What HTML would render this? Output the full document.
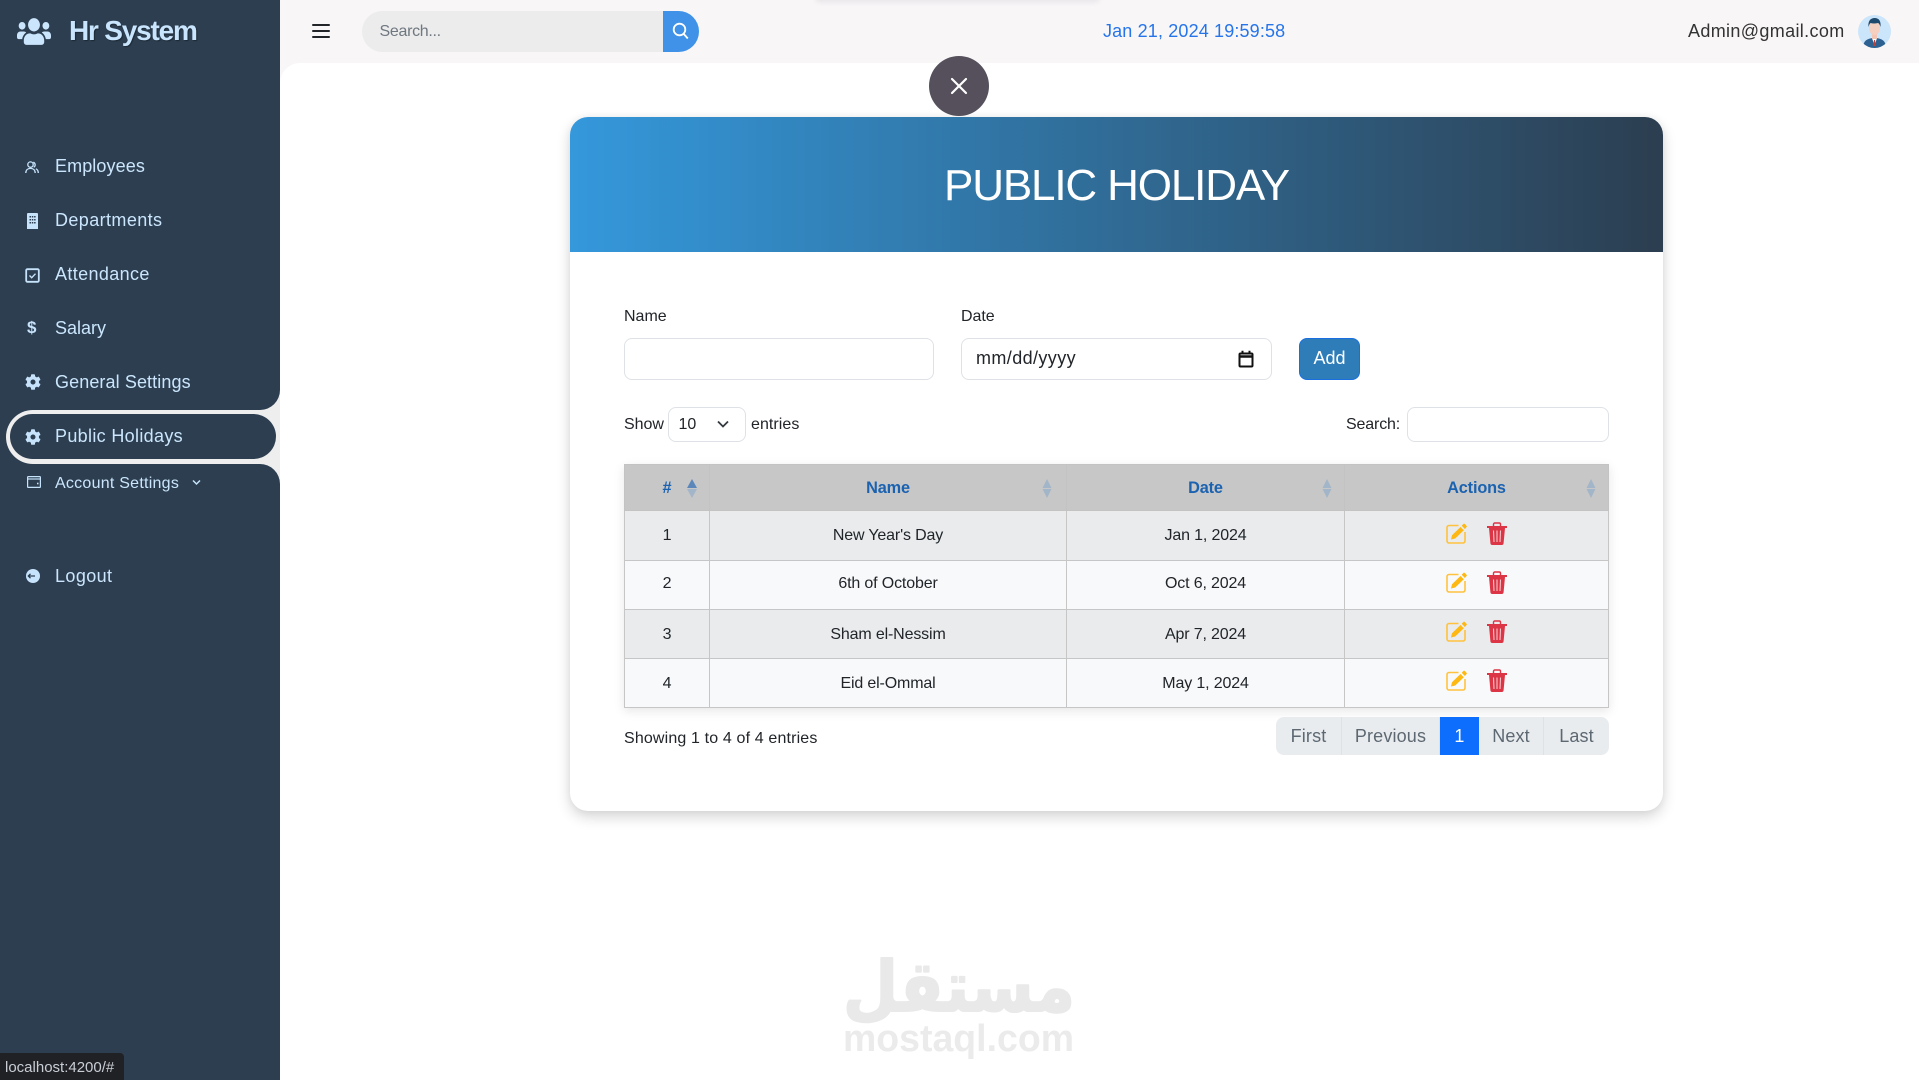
<!DOCTYPE html>
<html lang="en"><head><meta charset="utf-8"><title>Hr System</title>
<style>
*{box-sizing:border-box}
html,body{margin:0;padding:0;width:1919px;height:1080px;overflow:hidden;background:#fff;font-family:"Liberation Sans",Arial,sans-serif;color:#212529}
.a{position:absolute}
.t{position:absolute;height:24px;line-height:24px;white-space:nowrap;font-size:16px}
.nav{left:55px;font-size:18px;color:#cbe6fc}
.ni{position:absolute}
.field{position:absolute;background:#fff;border:1px solid #dee2e6;border-radius:8px}
table{position:absolute;left:624px;top:464px;width:984px;height:244px;border-collapse:collapse;table-layout:fixed;font-size:16px;letter-spacing:-.15px;box-shadow:0 3px 10px rgba(0,0,0,.1)}
th{background:#c7c7c7;color:#1b62b0;font-weight:700;height:46px;border:1px solid #c3c3c3;position:relative;padding:2px 0 0;font-size:16.3px}
td{height:49px;text-align:center;border:1px solid #c6c6c6;padding:0 0 2px}
tr.r1 td{height:50px;padding:0}
tr.d td{padding:2px 0 0}
tr.o td{background:#e9ebed}tr.e td{background:#f8f9fa}
.s{position:absolute;top:14px;width:10px;height:19px}
.pg{position:absolute;top:717px;height:38px;line-height:38px;text-align:center;font-size:18px;letter-spacing:.15px;color:#5d6872;background:#e9ecef;border-right:1px solid #dee2e6}
</style></head><body>

<!-- main + header -->
<div class="a" style="left:280px;top:0;width:1639px;height:90px;background:#f8f6f7"></div>
<div class="a" style="left:815px;top:-6px;width:285px;height:9px;background:rgba(0,0,0,.05);filter:blur(2px);border-radius:8px"></div>
<div class="a" style="left:280px;top:63px;width:1639px;height:1017px;background:#fff;border-top-left-radius:20px"></div>

<!-- sidebar -->
<div class="a" style="left:0;top:0;width:280px;height:1080px;background:#2c3e50"></div>
<div class="a" style="left:210px;top:380px;width:70px;height:110px;background:#eee"></div>
<div class="a" style="left:200px;top:370px;width:80px;height:40px;background:#2c3e50;border-bottom-right-radius:20px"></div>
<div class="a" style="left:200px;top:464px;width:80px;height:40px;background:#2c3e50;border-top-right-radius:20px"></div>
<div class="a" style="left:6px;top:410px;width:274px;height:54px;background:#eee;border-radius:27px 0 0 27px"></div>
<div class="a" style="left:10px;top:414px;width:266px;height:45px;background:#2c3e50;border-radius:23px"></div>

<svg class="a" style="left:17px;top:18px" width="34" height="27" viewBox="0 30 640 452" preserveAspectRatio="none" fill="#cbe6fc"><path d="M96 224c35.3 0 64-28.7 64-64s-28.7-64-64-64-64 28.7-64 64 28.7 64 64 64zm448 0c35.3 0 64-28.7 64-64s-28.7-64-64-64-64 28.7-64 64 28.7 64 64 64zm32 32h-64c-17.6 0-33.5 7.1-45.1 18.6 40.3 22.1 68.9 62 75.1 109.4h66c17.7 0 32-14.3 32-32v-32c0-35.3-28.7-64-64-64zm-256 0c61.9 0 112-50.1 112-112S381.9 32 320 32 208 82.1 208 144s50.1 112 112 112zm76.8 32h-8.3c-20.8 10-43.9 16-68.5 16s-47.6-6-68.5-16h-8.3C179.6 288 128 339.6 128 403.2V432c0 26.5 21.5 48 48 48h288c26.5 0 48-21.5 48-48v-28.8c0-63.6-51.6-115.2-115.2-115.2zm-223.7-13.4C161.5 263.1 145.6 256 128 256H64c-35.3 0-64 28.7-64 64v32c0 17.7 14.3 32 32 32h65.9c6.3-47.4 34.9-87.3 75.2-109.4z"/></svg>
<div class="t" style="left:69px;top:18px;height:26px;line-height:26px;font-size:28px;font-weight:700;color:#c9e5fd;letter-spacing:-1.2px;text-shadow:1px 1px 1px rgba(0,0,0,.35)">Hr System</div>

<svg class="ni" style="left:25px;top:161px" width="14" height="13" viewBox="0 0 14 13" fill="none" stroke="#c6e3fb" stroke-width="1.300"><circle cx="5.500" cy="3.600" r="2.700"/><path d="M.8 12c0-3 2-4.600 4.700-4.600s4.700 1.600 4.700 4.600"/><path d="M8.200 1.200a2.700 2.700 0 0 1 .5 5M10.800 7.800c1.500.6 2.500 2.100 2.500 4.200"/></svg>
<div class="t nav" style="top:154px;letter-spacing:.1px">Employees</div>

<svg class="ni" style="left:27px;top:213px" width="11" height="16" viewBox="0 0 11 16" fill="#c6e3fb"><path fill-rule="evenodd" d="M1 0h9a1 1 0 0 1 1 1v15H0V1a1 1 0 0 1 1-1zM2.500 3v1.500H4V3zm2.300 0v1.500h1.500V3zm2.300 0v1.500h1.500V3zM2.500 6v1.500H4V6zm2.300 0v1.500h1.500V6zm2.300 0v1.500h1.500V6zM2.500 9v1.500H4V9zm2.300 0v1.500h1.500V9zm2.300 0v1.500h1.500V9z"/></svg>
<div class="t nav" style="top:208px;letter-spacing:.4px">Departments</div>

<svg class="ni" style="left:25px;top:268px" width="15" height="15" viewBox="0 0 15 15" fill="none" stroke="#c6e3fb"><rect x="1.200" y="1.200" width="12.600" height="12.600" rx="1.200" stroke-width="1.800"/><path d="M4.500 7.500l2.200 2.200 3.800-4" stroke-width="1.400"/></svg>
<div class="t nav" style="top:262px;letter-spacing:.37px">Attendance</div>

<div class="t" style="left:27px;top:316px;font-size:17px;font-weight:700;color:#c6e3fb">$</div>
<div class="t nav" style="top:316px">Salary</div>

<svg class="ni" style="left:25px;top:374px" width="16" height="16" viewBox="0 0 512 512" fill="#c6e3fb"><path id="g" d="M487.400 315.700l-42.600-24.600c4.300-23.200 4.300-47 0-70.200l42.600-24.600c4.900-2.800 7.100-8.600 5.500-14-11.100-35.600-30-67.800-54.700-94.600-3.800-4.100-10-5.100-14.800-2.300L380.800 110c-17.900-15.400-38.500-27.300-60.800-35.100V25.800c0-5.600-3.900-10.500-9.400-11.700-36.700-8.200-74.300-7.800-109.200 0-5.500 1.200-9.400 6.100-9.400 11.700V75c-22.200 7.900-42.800 19.800-60.800 35.100L88.700 85.500c-4.900-2.800-11-1.900-14.800 2.300-24.700 26.700-43.600 58.900-54.700 94.600-1.700 5.400.6 11.200 5.500 14L67.300 221c-4.300 23.200-4.300 47 0 70.200l-42.600 24.600c-4.900 2.800-7.100 8.600-5.500 14 11.100 35.600 30 67.800 54.700 94.600 3.800 4.100 10 5.100 14.800 2.300l42.600-24.600c17.900 15.400 38.500 27.300 60.800 35.100v49.200c0 5.600 3.900 10.500 9.400 11.700 36.700 8.200 74.300 7.800 109.200 0 5.500-1.200 9.400-6.100 9.400-11.700v-49.200c22.200-7.900 42.800-19.800 60.800-35.100l42.600 24.600c4.900 2.800 11 1.900 14.800-2.300 24.700-26.700 43.600-58.900 54.700-94.600 1.500-5.500-.7-11.300-5.600-14.100zM256 336c-44.100 0-80-35.900-80-80s35.900-80 80-80 80 35.900 80 80-35.900 80-80 80z"/></svg>
<div class="t nav" style="top:370px;letter-spacing:.1px">General Settings</div>

<svg class="ni" style="left:25px;top:429px" width="16" height="16" viewBox="0 0 512 512" fill="#c6e3fb"><use href="#g"/></svg>
<div class="t nav" style="top:424px;letter-spacing:.33px">Public Holidays</div>

<svg class="ni" style="left:27px;top:476px" width="14" height="12" viewBox="0 0 14 12" fill="none" stroke="#c6e3fb" stroke-width="1.200"><rect x=".6" y=".6" width="12.800" height="10.800" rx=".8"/><path d="M.6 3h12.800"/><path d="M10 7.500h1.500" stroke-width="1.600"/></svg>
<div class="t nav" style="top:472px;font-size:16px;letter-spacing:.25px">Account Settings</div>
<svg class="a" style="left:192px;top:479px" width="9" height="7" viewBox="0 0 9 7" fill="none" stroke="#c6e3fb" stroke-width="1.500"><path d="M1 1.500l3.500 3.500L8 1.500"/></svg>

<svg class="ni" style="left:26px;top:569px" width="14" height="14" viewBox="0 0 14 14"><circle cx="7" cy="7" r="7" fill="#c6e3fb"/><path d="M2 7h7M4.500 4.800L2.300 7l2.200 2.200" fill="none" stroke="#2c3e50" stroke-width="1.300"/></svg>
<div class="t nav" style="top:564px;letter-spacing:.4px">Logout</div>

<div class="a" style="left:0;top:1053px;width:124px;height:27px;background:#202124;border-top-right-radius:4px"></div>
<div class="t" style="left:5px;top:1056px;font-size:15px;color:#c9ced6">localhost:4200/#</div>

<!-- header content -->
<svg class="a" style="left:312px;top:24px" width="18" height="14" viewBox="0 0 18 14" fill="#212529"><rect width="18" height="2" rx="1"/><rect y="6" width="18" height="2" rx="1"/><rect y="12" width="18" height="2" rx="1"/></svg>
<div class="a" style="left:362px;top:11px;width:337px;height:41px;background:#ececec;border-radius:21px"></div>
<div class="a" style="left:663px;top:11px;width:36px;height:41px;background:#3f92e7;border-radius:0 21px 21px 0"></div>
<svg class="a" style="left:672px;top:22px" width="17" height="18" viewBox="0 0 17 18" fill="none" stroke="#fff" stroke-width="1.800"><circle cx="7.500" cy="7.500" r="5.800"/><path d="M11.800 12l4 4.500"/></svg>
<div class="t" style="left:379.500px;top:20px;font-size:16px;color:#6f7780;letter-spacing:-.3px">Search...</div>
<div class="t" style="left:1103px;top:19px;font-size:18px;color:#2574ea;letter-spacing:.15px">Jan 21, 2024 19:59:58</div>
<div class="t" style="left:1688px;top:19px;font-size:18px;color:#333;letter-spacing:.35px">Admin@gmail.com</div>
<svg class="a" style="left:1858px;top:15px" width="33" height="33" viewBox="0 0 33 33"><defs><clipPath id="av"><circle cx="16.500" cy="16.500" r="16.500"/></clipPath></defs><g clip-path="url(#av)"><rect width="33" height="33" fill="#cbe5fb"/><path d="M5 33c0-7 4-10 11.500-10S28 26 28 33z" fill="#2d6191"/><path d="M13.500 22h6l-3 8z" fill="#fff"/><path d="M16 25h1l.7 6h-2.400z" fill="#b8433a"/><rect x="14" y="18" width="5" height="6" fill="#f1c6b4"/><ellipse cx="16.500" cy="13" rx="5.500" ry="7" fill="#f5cfc0"/><path d="M10.500 12c-.7-6 2-9 6.200-9s6.500 3 5.800 9c-.5-2-1.300-3.500-2.500-4-3 .8-5.500.6-7.500 0-1 .8-1.500 2.200-2 4z" fill="#1f4a6e"/></g></svg>

<!-- card -->
<div class="a" style="left:570px;top:117px;width:1093px;height:694px;background:#fff;border-radius:18px;box-shadow:0 6px 14px rgba(0,0,0,.16),0 0 8px rgba(0,0,0,.05)"></div>
<div class="a" style="left:570px;top:117px;width:1093px;height:135px;background:linear-gradient(90deg,#3498db,#2c3e50);border-radius:18px 18px 0 0"></div>
<div class="t" style="left:570px;width:1093px;top:161px;height:50px;line-height:50px;text-align:center;font-size:44px;color:#fff;letter-spacing:-1.15px">PUBLIC HOLIDAY</div>

<div class="a" style="left:929px;top:56px;width:60px;height:60px;border-radius:50%;background:#55505b"></div>
<svg class="a" style="left:950px;top:77px" width="18" height="18" viewBox="0 0 18 18" stroke="#fff" stroke-width="2.200" stroke-linecap="round"><path d="M2 2l14 14M16 2L2 16"/></svg>

<div class="t" style="left:624px;top:305px">Name</div>
<div class="t" style="left:961px;top:305px;letter-spacing:-.05px">Date</div>
<input class="field" style="left:624px;top:338px;width:310px;height:42px" type="text" aria-label="Name">
<div class="field" style="left:961px;top:338px;width:311px;height:42px"></div>
<div class="t" style="left:976px;top:346px;font-size:18px;letter-spacing:.4px">mm/dd/yyyy</div>
<svg class="a" style="left:1238px;top:350px" width="16" height="18" viewBox="0 0 16 18" fill="none" stroke="#111" stroke-width="2"><rect x="1.500" y="3.500" width="13" height="13" rx="1"/><path d="M1.500 6.500h13" stroke-width="2.500"/><path d="M4.500.8v3M11.500.8v3"/></svg>
<div class="a" style="left:1299px;top:338px;width:61px;height:42px;background:#2e7db9;border:1px solid #1a6fe0;border-radius:8px;color:#fff;font-size:18px;line-height:38px;text-align:center">Add</div>

<div class="t" style="left:624px;top:413px;letter-spacing:-.05px">Show</div>
<div class="field" style="left:668px;top:407px;width:78px;height:35px"></div>
<div class="t" style="left:678.500px;top:413px">10</div>
<svg class="a" style="left:716px;top:420px" width="14" height="9" viewBox="0 0 14 9" fill="none" stroke="#343a40" stroke-width="1.800"><path d="M2 1.500l5 5 5-5"/></svg>
<div class="t" style="left:751px;top:413px;letter-spacing:.05px">entries</div>
<div class="t" style="left:1346px;top:413px;letter-spacing:-.15px">Search:</div>
<div class="field" style="left:1407px;top:407px;width:202px;height:35px"></div>

<table>
<colgroup><col style="width:85px"><col style="width:357px"><col style="width:278px"><col style="width:264px"></colgroup>
<tr><th>#<svg class="s" style="left:62px" viewBox="0 0 10 19"><path d="M5 0l5 9H0z" fill="#5b87bb"/><path d="M5 19L0 10h10z" fill="#a3b6c9"/></svg></th>
<th>Name<svg class="s" style="left:332px" viewBox="0 0 10 19"><path d="M5 0l4.500 9h-9zM5 19L.5 10h9z" fill="#a3b6c9"/></svg></th>
<th>Date<svg class="s" style="left:255px" viewBox="0 0 10 19"><path d="M5 0l4.500 9h-9zM5 19L.5 10h9z" fill="#a3b6c9"/></svg></th>
<th>Actions<svg class="s" style="left:241px" viewBox="0 0 10 19"><path d="M5 0l4.500 9h-9zM5 19L.5 10h9z" fill="#a3b6c9"/></svg></th></tr>
<tr class="o r1"><td>1</td><td>New Year's Day</td><td>Jan 1, 2024</td><td></td></tr>
<tr class="e"><td>2</td><td>6th of October</td><td>Oct 6, 2024</td><td></td></tr>
<tr class="o d"><td>3</td><td>Sham el-Nessim</td><td>Apr 7, 2024</td><td></td></tr>
<tr class="e d"><td>4</td><td>Eid el-Ommal</td><td>May 1, 2024</td><td></td></tr>
</table>

<svg width="0" height="0" style="position:absolute"><defs>
<g id="ed"><path d="M12.500 2.500H3a2 2 0 0 0-2 2V18a2 2 0 0 0 2 2h14a2 2 0 0 0 2-2V9" fill="none" stroke="#ffc23e" stroke-width="1.600"/><path d="M5 16.500l1-4.200 8.500-8.300 3.300 3.200-8.600 8.300zM15.700 2.800L17.400 1a1 1 0 0 1 1.400 0l1.700 1.700a1 1 0 0 1 0 1.400L18.900 6z" fill="#fdb813"/></g>
<g id="tr"><path d="M6.500 4.500V2.300A1.300 1.300 0 0 1 7.800 1h4.400a1.300 1.300 0 0 1 1.300 1.300v2.200" fill="none" stroke="#dc3545" stroke-width="1.400"/><path d="M0 4h20v2H0z" fill="#dc3545"/><path d="M2 6h16l-1.400 15a2 2 0 0 1-2 2H5.400a2 2 0 0 1-2-2z" fill="#dc3545"/><path d="M6.500 8.500l.5 11.500M10 8.500V20M13.500 8.500L13 20" stroke="#f5c6cb" stroke-width="1.100"/></g>
</defs></svg>
<svg class="a" style="left:1446px;top:523px" width="21" height="21" viewBox="0 0 21 21"><use href="#ed"/></svg>
<svg class="a" style="left:1487px;top:522px" width="20" height="23" viewBox="0 0 20 23"><use href="#tr"/></svg>
<svg class="a" style="left:1446px;top:572px" width="21" height="21" viewBox="0 0 21 21"><use href="#ed"/></svg>
<svg class="a" style="left:1487px;top:571px" width="20" height="23" viewBox="0 0 20 23"><use href="#tr"/></svg>
<svg class="a" style="left:1446px;top:621px" width="21" height="21" viewBox="0 0 21 21"><use href="#ed"/></svg>
<svg class="a" style="left:1487px;top:620px" width="20" height="23" viewBox="0 0 20 23"><use href="#tr"/></svg>
<svg class="a" style="left:1446px;top:670px" width="21" height="21" viewBox="0 0 21 21"><use href="#ed"/></svg>
<svg class="a" style="left:1487px;top:669px" width="20" height="23" viewBox="0 0 20 23"><use href="#tr"/></svg>

<div class="t" style="left:624px;top:727px;letter-spacing:.15px">Showing 1 to 4 of 4 entries</div>
<div class="pg" style="left:1276px;width:66px;border-radius:8px 0 0 8px">First</div>
<div class="pg" style="left:1342px;width:98px">Previous</div>
<div class="pg" style="left:1440px;width:39px;background:#0d6efd;color:#fff;border:0">1</div>
<div class="pg" style="left:1479px;width:65px">Next</div>
<div class="pg" style="left:1544px;width:65px;border-radius:0 8px 8px 0;border:0">Last</div>

<!-- watermark -->
<svg class="a" style="left:840px;top:940px" width="240" height="120" viewBox="0 0 240 120">
<text x="119" y="71" text-anchor="middle" font-family="'DejaVu Sans',sans-serif" font-weight="700" font-size="70" fill="#e9e9e9" stroke="#e9e9e9" stroke-width="2" stroke-linejoin="round" textLength="232" lengthAdjust="spacingAndGlyphs">مستقل</text>
<text x="3" y="111" font-family="'Liberation Sans',sans-serif" font-weight="700" font-size="38" fill="#ebebeb" textLength="231" lengthAdjust="spacingAndGlyphs">mostaql.com</text>
</svg>
</body></html>
